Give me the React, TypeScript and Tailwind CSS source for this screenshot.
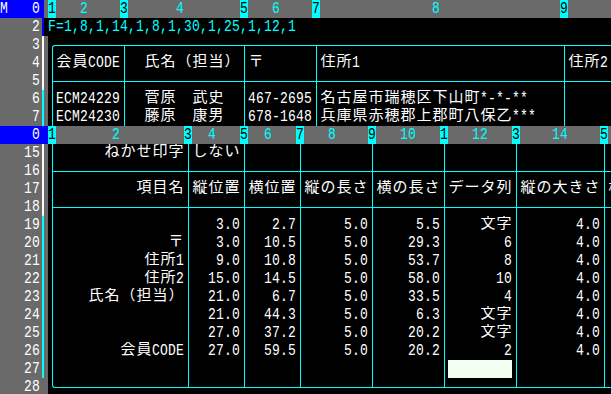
import React from 'react'
import clsx from 'clsx'

type Kind = 'data' | 'top' | 'mid' | 'bot'
type Cell = { t?: string; r?: boolean; cursor?: boolean }
type Row = { n: number; bar: string; kind: Kind; cells?: Record<number, Cell> }

const W: Record<number, string> = {
  1: 'w-[8px]',
  6: 'w-[48px]',
  8: 'w-[64px]',
  10: 'w-[80px]',
  14: 'w-[112px]',
  16: 'w-[128px]',
  25: 'w-[200px]',
  30: 'w-[240px]',
}

const WHITE = 'bg-white'
const CYAN = 'bg-[#00ffff]'
const BLUE = 'bg-[#0000ff]'
const GRAY = 'bg-[#6a6a6a]'

const topCols = [1, 8, 1, 14, 1, 8, 1, 30, 1, 25]
const bottomCols = [1, 16, 1, 6, 1, 6, 1, 8, 1, 8, 1, 8, 1, 10, 1, 10]

const topRows: Row[] = [
  { n: 3, bar: WHITE, kind: 'top' },
  { n: 4, bar: WHITE, kind: 'data', cells: { 1: { t: '会員CODE' }, 3: { t: '  氏名（担当）' }, 5: { t: '〒' }, 7: { t: '住所1' }, 9: { t: '住所2' } } },
  { n: 5, bar: WHITE, kind: 'mid' },
  { n: 6, bar: CYAN, kind: 'data', cells: { 1: { t: 'ECM24229' }, 3: { t: '  菅原　武史' }, 5: { t: '467-2695' }, 7: { t: '名古屋市瑞穂区下山町*-*-**' } } },
  { n: 7, bar: CYAN, kind: 'data', cells: { 1: { t: 'ECM24230' }, 3: { t: '  藤原　康男' }, 5: { t: '678-1648' }, 7: { t: '兵庫県赤穂郡上郡町八保乙***' } } },
]

const items = [
  ['', '3.0', '2.7', '5.0', '5.5', '文字', '4.0'],
  ['〒', '3.0', '10.5', '5.0', '29.3', '6', '4.0'],
  ['住所1', '9.0', '10.8', '5.0', '53.7', '8', '4.0'],
  ['住所2', '15.0', '14.5', '5.0', '58.0', '10', '4.0'],
  ['氏名（担当）', '21.0', '6.7', '5.0', '33.5', '4', '4.0'],
  ['', '21.0', '44.3', '5.0', '6.3', '文字', '4.0'],
  ['', '27.0', '37.2', '5.0', '20.2', '文字', '4.0'],
  ['会員CODE', '27.0', '59.5', '5.0', '20.2', '2', '4.0'],
]

const bottomRows: Row[] = [
  { n: 15, bar: WHITE, kind: 'data', cells: { 1: { t: 'ねかせ印字', r: true }, 3: { t: 'しない' } } },
  { n: 16, bar: WHITE, kind: 'mid' },
  {
    n: 17,
    bar: WHITE,
    kind: 'data',
    cells: {
      1: { t: '項目名', r: true },
      3: { t: '縦位置' },
      5: { t: '横位置' },
      7: { t: '縦の長さ' },
      9: { t: '横の長さ' },
      11: { t: 'データ列' },
      13: { t: '縦の大きさ' },
      15: { t: '横の大きさ' },
    },
  },
  { n: 18, bar: WHITE, kind: 'mid' },
  ...items.map((it, i) => ({
    n: 19 + i,
    bar: CYAN,
    kind: 'data' as Kind,
    cells: Object.fromEntries(it.map((t, j) => [1 + j * 2, { t, r: true }])),
  })),
  { n: 27, bar: CYAN, kind: 'data', cells: { 11: { cursor: true } } },
  { n: 28, bar: GRAY, kind: 'bot' },
]

// fixed cells like the text screen: 8px half width, 16px full width
function Txt({ s }: { s: string }) {
  return (
    <>
      {Array.from(s).map((ch, i) =>
        ch.charCodeAt(0) > 0xff ? (
          <span key={i} className="flex w-[16px] shrink-0 justify-center text-[15px]">
            {ch === '　' ? '' : ch}
          </span>
        ) : (
          <span key={i} className="flex w-[8px] shrink-0 scale-y-[1.3] justify-center text-[13px]">
            {ch === ' ' ? '' : ch}
          </span>
        ),
      )}
    </>
  )
}

const L = 'border-[#00ffff]'

function SepCell({ kind, first }: { kind: Kind; first: boolean }) {
  if (kind === 'data')
    return (
      <div className="flex h-full w-[8px] shrink-0">
        <div className="w-[4px]" />
        <div className={clsx('w-[4px] border-l', L)} />
      </div>
    )
  if (kind === 'bot')
    return (
      <div className="flex h-full w-[8px] shrink-0 flex-col">
        <div className="flex h-[10px]">
          <div className={clsx('w-[4px]', !first && 'border-b', L)} />
          <div className={clsx('w-[4px] border-b border-l', first && 'rounded-bl-[3px]', L)} />
        </div>
      </div>
    )
  return (
    <div className="flex h-full w-[8px] shrink-0 flex-col">
      <div className="flex h-[9px]">
        <div className="w-[4px]" />
        <div className={clsx('w-[4px]', kind === 'mid' && 'border-l', L)} />
      </div>
      <div className="flex h-[9px]">
        <div className={clsx('w-[4px]', !first && 'border-t', L)} />
        <div className={clsx('w-[4px] border-l border-t', first && kind === 'top' && 'rounded-tl-[3px]', L)} />
      </div>
    </div>
  )
}

function Line({ w }: { w: number }) {
  return (
    <div className={clsx('flex shrink-0 flex-col', W[w])}>
      <div className="h-[9px]" />
      <div className={clsx('h-[9px] border-t', L)} />
    </div>
  )
}

function Gutter({ n, bar, black }: { n: number; bar: string; black?: boolean }) {
  return (
    <>
      <div className={clsx('flex w-[42px] shrink-0 justify-end pr-[2px] text-white', GRAY)}>
        <Txt s={String(n)} />
      </div>
      <div className={clsx('w-[2px] shrink-0', bar)} />
      <div className={clsx('w-[4px] shrink-0', black ? 'bg-black' : GRAY)} />
    </>
  )
}

function Header({ cols, gutter, active }: { cols: number[]; gutter: string; active?: boolean }) {
  return (
    <div className={clsx('flex h-[18px]', GRAY)}>
      <div className={clsx('flex w-[44px] shrink-0 text-white', BLUE)}>
        <Txt s={gutter} />
      </div>
      <div className={clsx('w-[4px] shrink-0', active ? BLUE : GRAY)} />
      <div className="flex flex-1 overflow-hidden">
        {cols.map((w, i) => {
          const n = i + 1
          if (w === 1)
            return (
              <div key={i} className={clsx('flex w-[8px] shrink-0 text-black', CYAN)}>
                <Txt s={String(n % 10)} />
              </div>
            )
          const label = String(n)
          return (
            <div key={i} className={clsx('flex shrink-0 text-[#00ffff]', W[w])}>
              <Txt s={' '.repeat(Math.floor((w - label.length) / 2)) + label} />
            </div>
          )
        })}
      </div>
    </div>
  )
}

function SheetRow({ row, cols }: { row: Row; cols: number[] }) {
  return (
    <div className="flex h-[18px]">
      <Gutter n={row.n} bar={row.bar} />
      <div className="flex flex-1 overflow-hidden bg-black text-white">
        {cols.map((w, i) => {
          if (w === 1) return <SepCell key={i} kind={row.kind} first={i === 0} />
          if (row.kind !== 'data') return <Line key={i} w={w} />
          const c = row.cells?.[i]
          return (
            <div key={i} className={clsx('flex shrink-0', W[w], c?.r && 'justify-end', c?.cursor && 'bg-[#f4fff4]')}>
              {c?.t && <Txt s={c.t} />}
            </div>
          )
        })}
      </div>
    </div>
  )
}

export default function App() {
  return (
    <div className="h-[394px] w-[611px] overflow-hidden bg-black font-['Liberation_Mono','Noto_Sans_CJK_JP',monospace] text-[16px] leading-[18px]">
      <Header cols={topCols} gutter="M   0" />
      <div className="flex h-[18px]">
        <Gutter n={2} bar={BLUE} black />
        <div className="flex flex-1 overflow-hidden bg-black text-[#00ffff]">
          <Txt s="F=1,8,1,14,1,8,1,30,1,25,1,12,1" />
        </div>
      </div>
      {topRows.map((r) => (
        <SheetRow key={r.n} row={r} cols={topCols} />
      ))}
      <Header cols={bottomCols} gutter="    0" active />
      {bottomRows.map((r) => (
        <SheetRow key={r.n} row={r} cols={bottomCols} />
      ))}
    </div>
  )
}
